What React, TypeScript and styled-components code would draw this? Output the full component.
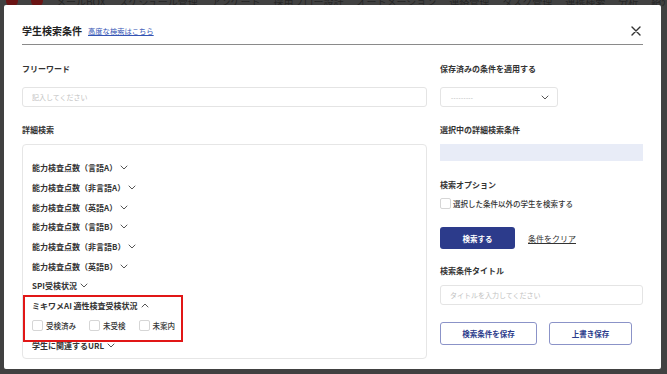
import styled, { createGlobalStyle } from "styled-components";

const GlobalStyle = createGlobalStyle`
  html, body {
    margin: 0;
    padding: 0;
    background: #3f3f3f;
  }
  body {
    font-family: "Noto Sans CJK JP", "Noto Sans", sans-serif;
    color: #333;
  }
  * {
    box-sizing: border-box;
  }
`;

const Screen = styled.div`
  position: relative;
  width: 667px;
  height: 374px;
  overflow: hidden;
  background: #414141;
`;

const BgNav = styled.div`
  display: flex;
  align-items: center;
  gap: 13px;
  height: 12px;
  margin-top: -5px;
  padding-left: 6px;
  font-size: 10px;
  color: #262626;
  white-space: nowrap;
`;

const BgBadge = styled.span`
  display: inline-block;
  min-width: 12px;
  height: 12px;
  padding: 0 4px;
  border-radius: 6px;
  background: #6a1414;
`;

const Overlay = styled.div`
  position: absolute;
  inset: 0;
  padding: 5px 6px 5px 4px;
`;

const Modal = styled.div`
  height: 100%;
  background: #fff;
  border-radius: 2px;
  padding: 0 18px;
`;

const Header = styled.div`
  display: flex;
  align-items: center;
  gap: 6px;
  padding: 19px 2px 6px 0;
  border-bottom: 1px solid #8a8a8a;
`;

const Title = styled.h1`
  margin: 0;
  font-size: 10px;
  line-height: 14px;
  font-weight: 700;
  color: #222;
`;

const HeaderLink = styled.a`
  font-size: 7.3px;
  line-height: 14px;
  color: #3454b4;
  text-decoration: underline;
  cursor: pointer;
`;

const CloseButton = styled.button`
  margin-left: auto;
  padding: 0;
  border: none;
  background: none;
  display: flex;
  cursor: pointer;
`;

const Body = styled.div`
  display: grid;
  grid-template-columns: 405px 203px;
  column-gap: 13px;
  padding-top: 17px;
`;

const Column = styled.div`
  display: flex;
  flex-direction: column;
  align-items: flex-start;
`;

const Label = styled.div<{ $top?: number; $bottom?: number }>`
  font-size: 8px;
  line-height: 14px;
  font-weight: 700;
  color: #333;
  margin-top: ${(p) => p.$top ?? 0}px;
  margin-bottom: ${(p) => p.$bottom ?? 0}px;
`;

const TextInput = styled.input<{ $top?: number }>`
  width: 100%;
  height: 20px;
  margin-top: ${(p) => p.$top ?? 0}px;
  padding: 0 9px;
  border: 1px solid #e4e4e4;
  border-radius: 3px;
  font-family: inherit;
  font-size: 7px;
  color: #333;
  outline: none;
  &::placeholder {
    color: #c2c2c2;
  }
`;

const Select = styled.div`
  width: 118px;
  height: 20px;
  display: flex;
  align-items: center;
  justify-content: space-between;
  padding: 0 8px 0 10px;
  border: 1px solid #e4e4e4;
  border-radius: 3px;
  font-size: 6px;
  color: #a5a5a5;
  letter-spacing: 0.4px;
`;

const Panel = styled.div`
  width: 100%;
  padding: 13px 9px 3px;
  border: 1px solid #e6e6e6;
  border-radius: 4px;
`;

const Row = styled.div`
  display: flex;
  align-items: center;
  gap: 3px;
  height: 19.7px;
  font-size: 8px;
  font-weight: 700;
  color: #333;
`;

const Highlight = styled.div`
  position: relative;
  &::after {
    content: "";
    position: absolute;
    top: -0.5px;
    left: -9px;
    width: 156px;
    height: 43px;
    border: 2px solid #e11717;
    pointer-events: none;
  }
`;

const CheckRow = styled.div`
  display: flex;
  align-items: center;
  gap: 13px;
  height: 19.7px;
`;

const CheckItem = styled.label<{ $gap?: number }>`
  display: flex;
  align-items: center;
  gap: ${(p) => p.$gap ?? 3}px;
  font-size: 7.5px;
  font-weight: 500;
  color: #333;
  cursor: pointer;
`;

const Box = styled.span`
  width: 11px;
  height: 11px;
  border: 1px solid #d6d6d6;
  border-radius: 2px;
  background: #fff;
`;

const SelectedBox = styled.div`
  width: 100%;
  height: 17px;
  background: #e8ecf7;
`;

const OptionRow = styled.div`
  margin-top: 6px;
`;

const ActionRow = styled.div<{ $gap: number; $top: number }>`
  display: flex;
  align-items: center;
  gap: ${(p) => p.$gap}px;
  margin-top: ${(p) => p.$top}px;
`;

const PrimaryButton = styled.button`
  width: 75px;
  height: 22px;
  border: none;
  border-radius: 3px;
  background: #2c3b8b;
  color: #fff;
  font-family: inherit;
  font-size: 7.5px;
  font-weight: 700;
  cursor: pointer;
`;

const ClearLink = styled.a`
  font-size: 8px;
  color: #333;
  text-decoration: underline;
  cursor: pointer;
`;

const OutlineButton = styled.button<{ $width: number }>`
  width: ${(p) => p.$width}px;
  height: 23px;
  border: 1px solid #8b93c8;
  border-radius: 3px;
  background: #fff;
  color: #2c3b8b;
  font-family: inherit;
  font-size: 7.5px;
  font-weight: 700;
  cursor: pointer;
`;

function Chevron({ up = false }: { up?: boolean }) {
  return (
    <svg width="8" height="5" viewBox="0 0 8 5" fill="none">
      <polyline
        points={up ? "1,4 4,1 7,4" : "1,1 4,4 7,1"}
        stroke="#555"
        strokeWidth="1"
        strokeLinecap="round"
        strokeLinejoin="round"
      />
    </svg>
  );
}

const navItems = [
  "メールBOX",
  "スケジュール管理",
  "アンケート",
  "採用フロー設計",
  "オートメーション",
  "連絡管理",
  "タスク管理",
  "連携検索",
  "分析",
  "紹介会社",
  "採用HP",
];

const scoreItems = [
  "能力検査点数（言語A）",
  "能力検査点数（非言語A）",
  "能力検査点数（英語A）",
  "能力検査点数（言語B）",
  "能力検査点数（非言語B）",
  "能力検査点数（英語B）",
  "SPI受検状況",
];

const statuses = ["受検済み", "未受検", "未案内"];

export default function App() {
  return (
    <>
      <GlobalStyle />
      <Screen>
        <BgNav>
          <BgBadge />
          <BgBadge />
          {navItems.map((item) => (
            <span key={item}>{item}</span>
          ))}
        </BgNav>

        <Overlay>
          <Modal>
            <Header>
              <Title>学生検索条件</Title>
              <HeaderLink>高度な検索はこちら</HeaderLink>
              <CloseButton aria-label="閉じる">
                <svg width="10" height="10" viewBox="0 0 10 10">
                  <path
                    d="M1 1 L9 9 M9 1 L1 9"
                    stroke="#333"
                    strokeWidth="1.4"
                    strokeLinecap="round"
                  />
                </svg>
              </CloseButton>
            </Header>

            <Body>
              <Column>
                <Label $bottom={11}>フリーワード</Label>
                <TextInput placeholder="記入してください" />
                <Label $top={16} $bottom={7}>
                  詳細検索
                </Label>
                <Panel>
                  {scoreItems.map((item) => (
                    <Row key={item}>
                      {item}
                      <Chevron />
                    </Row>
                  ))}
                  <Highlight>
                    <Row>
                      ミキワメAI 適性検査受検状況
                      <Chevron up />
                    </Row>
                    <CheckRow>
                      {statuses.map((s) => (
                        <CheckItem key={s}>
                          <Box />
                          {s}
                        </CheckItem>
                      ))}
                    </CheckRow>
                  </Highlight>
                  <Row>
                    学生に関連するURL
                    <Chevron />
                  </Row>
                </Panel>
              </Column>

              <Column>
                <Label $bottom={11}>保存済みの条件を適用する</Label>
                <Select>
                  ---------
                  <Chevron />
                </Select>
                <Label $top={16} $bottom={7}>
                  選択中の詳細検索条件
                </Label>
                <SelectedBox />
                <Label $top={17}>検索オプション</Label>
                <OptionRow>
                  <CheckItem $gap={2}>
                    <Box />
                    選択した条件以外の学生を検索する
                  </CheckItem>
                </OptionRow>
                <ActionRow $gap={13} $top={18}>
                  <PrimaryButton>検索する</PrimaryButton>
                  <ClearLink>条件をクリア</ClearLink>
                </ActionRow>
                <Label $top={15} $bottom={7}>
                  検索条件タイトル
                </Label>
                <TextInput placeholder="タイトルを入力してください" />
                <ActionRow $gap={12} $top={17}>
                  <OutlineButton $width={97}>検索条件を保存</OutlineButton>
                  <OutlineButton $width={83}>上書き保存</OutlineButton>
                </ActionRow>
              </Column>
            </Body>
          </Modal>
        </Overlay>
      </Screen>
    </>
  );
}
